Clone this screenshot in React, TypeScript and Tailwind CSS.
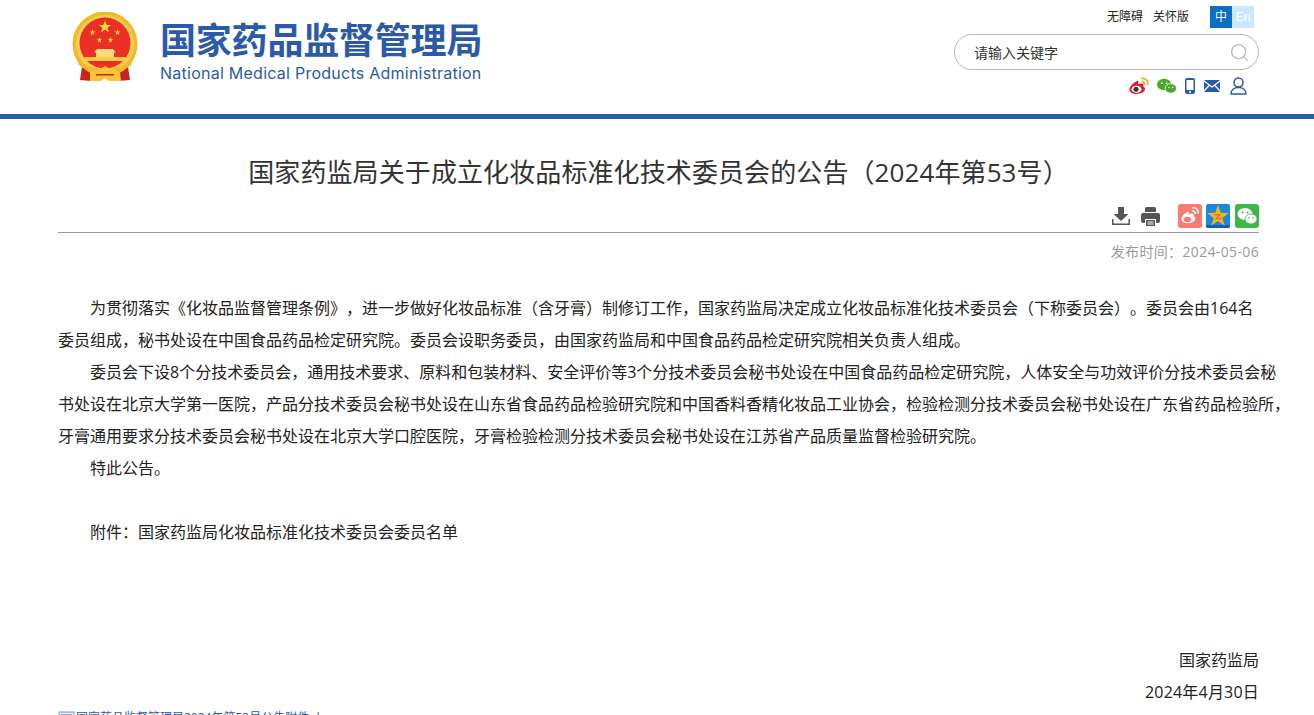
import { Search } from "lucide-react"

const CJK = "font-['Open_Sans','Noto_Sans_CJK_SC',sans-serif] [text-spacing-trim:space-all]"

const BODY_LINES = [
  { text: "为贯彻落实《化妆品监督管理条例》，进一步做好化妆品标准（含牙膏）制修订工作，国家药监局决定成立化妆品标准化技术委员会（下称委员会）。委员会由164名", indent: true },
  { text: "委员组成，秘书处设在中国食品药品检定研究院。委员会设职务委员，由国家药监局和中国食品药品检定研究院相关负责人组成。" },
  { text: "委员会下设8个分技术委员会，通用技术要求、原料和包装材料、安全评价等3个分技术委员会秘书处设在中国食品药品检定研究院，人体安全与功效评价分技术委员会秘", indent: true },
  { text: "书处设在北京大学第一医院，产品分技术委员会秘书处设在山东省食品药品检验研究院和中国香料香精化妆品工业协会，检验检测分技术委员会秘书处设在广东省药品检验所，" },
  { text: "牙膏通用要求分技术委员会秘书处设在北京大学口腔医院，牙膏检验检测分技术委员会秘书处设在江苏省产品质量监督检验研究院。" },
  { text: "特此公告。", indent: true },
  { text: "\u00a0" },
  { text: "附件：国家药监局化妆品标准化技术委员会委员名单", indent: true },
]

// five-pointed star polygon for the emblem
function starPoints(cx: number, cy: number, r: number) {
  const pts: string[] = []
  for (let i = 0; i < 10; i++) {
    const rad = i % 2 === 0 ? r : r * 0.4
    const a = -Math.PI / 2 + (i * Math.PI) / 5
    pts.push(`${(cx + rad * Math.cos(a)).toFixed(2)},${(cy + rad * Math.sin(a)).toFixed(2)}`)
  }
  return pts.join(" ")
}

function Emblem() {
  return (
    <svg width="66" height="70" viewBox="0 0 66 70" className="shrink-0">
      <path d="M11 48 L8 68 L20 69 L33 66 L46 69 L58 68 L55 48 Z" fill="#c9231d" />
      <circle cx="33" cy="32" r="32.500" fill="#f2b92e" />
      <circle cx="33" cy="32" r="29" fill="#f7cf4d" />
      <circle cx="33" cy="31" r="25.500" fill="#ea2f27" />
      <polygon points={starPoints(33, 15, 6.5)} fill="#ffdc3c" />
      <polygon points={starPoints(20.5, 20.5, 3.2)} fill="#ffdc3c" />
      <polygon points={starPoints(45.5, 20.5, 3.2)} fill="#ffdc3c" />
      <polygon points={starPoints(27.5, 28, 3)} fill="#ffdc3c" />
      <polygon points={starPoints(38.5, 28, 3)} fill="#ffdc3c" />
      <path d="M25 37h16l3 3.500h-2V45H24v-4.500h-2z" fill="#f9dc7d" />
      <path d="M13 45h40l2 4H11z" fill="#f7cb45" />
      <path d="M8 49c6 5 14 8 25 8s19-3 25-8l2 3c-6 6-15 9-27 9S12 58 6 52z" fill="#f2b92e" />
      <path d="M18 60c5-1 10-3 15-6 5 3 10 5 15 6l1 9H37l-4-3-4 3H18z" fill="#f6c638" />
      <path d="M24 62h18v1.500H24z" fill="#c9231d" />
    </svg>
  )
}

function Header() {
  return (
    <header className="h-[114px] flex justify-between pl-[72px] pr-[55px]">
      <div className="flex items-start pt-[12px]">
        <Emblem />
        <div className="ml-[22px] pt-[9px] text-[#2b5aa8]">
          <div className={`${CJK} text-[36px] leading-[40px] font-bold whitespace-nowrap tracking-[-0.2px]`}>国家药品监督管理局</div>
          <div className="mt-[1px] font-['Inter',sans-serif] text-[16px] leading-[22px] whitespace-nowrap tracking-[0.25px]">National Medical Products Administration</div>
        </div>
      </div>
      <div className="w-[305px] flex flex-col items-end">
        <div className="h-[26px] mt-[4px] flex items-center pr-[5px]">
          <span className={`${CJK} text-[12px] text-[#222] mr-[10px]`}>无障碍</span>
          <span className={`${CJK} text-[12px] text-[#222] mr-[21px]`}>关怀版</span>
          <span className={`${CJK} w-[22px] h-[22px] bg-[#0b6fc2] text-white text-[12px] flex items-center justify-center`}>中</span>
          <span className="w-[22px] h-[22px] bg-[#cce8ff] text-white text-[12px] font-['Liberation_Sans'] flex items-center justify-center">En</span>
        </div>
        <div className="w-[305px] h-[36px] mt-[4px] border border-[#b5b5b5] rounded-[18px] flex items-center justify-between pl-[19px] pr-[8px]">
          <span className={`${CJK} text-[14px] text-[#333]`}>请输入关键字</span>
          <Search size={21} strokeWidth={1.5} className="text-[#bbb]" />
        </div>
        <div className="mt-[7px] flex items-center pr-[12px] h-[18px]">
          <svg width="20" height="18" viewBox="0 0 20 18">
            <path d="M8 4C3.500 6.500 0 10 .5 13c.7 3.500 6 4.800 10.500 3.500 4-1 6-4 4.500-6-.8-.8-1.500-.7-1.200-2 .4-2-1.500-2.700-5.300-1.300C9.500 4.500 9.500 3.300 8 4z" fill="#e6162d" />
            <ellipse cx="7.500" cy="12.300" rx="5" ry="3.600" fill="#fff" />
            <circle cx="7" cy="12.300" r="2.500" fill="#333" />
            <path d="M12 1.500c4.500-1 7.500 2.500 6.500 6.500M12.500 4.800c2-.5 3.300 1 2.800 3" fill="none" stroke="#f5a623" strokeWidth="1.700" />
          </svg>
          <svg width="20" height="16" viewBox="0 0 21 16" className="ml-[8px]">
            <ellipse cx="7.500" cy="6.500" rx="7.500" ry="6" fill="#4aa82a" />
            <ellipse cx="14.500" cy="10.500" rx="6" ry="5" fill="#4aa82a" stroke="#fff" strokeWidth=".8" />
            <circle cx="5" cy="5" r="1" fill="#fff" />
            <circle cx="10" cy="5" r="1" fill="#fff" />
            <circle cx="12.500" cy="9.500" r=".8" fill="#fff" />
            <circle cx="16.500" cy="9.500" r=".8" fill="#fff" />
          </svg>
          <svg width="10" height="16" viewBox="0 0 10 16" className="ml-[8px]">
            <rect width="10" height="16" rx="2" fill="#2b5aa8" />
            <rect x="1.500" y="2" width="7" height="10" fill="#fff" />
            <circle cx="5" cy="14" r="1" fill="#fff" />
          </svg>
          <svg width="16" height="12" viewBox="0 0 16 12" className="ml-[9px]">
            <rect width="16" height="12" rx="1" fill="#2b5aa8" />
            <path d="M0 1l8 6 8-6M0 11l5.500-6M16 11l-5.500-6" fill="none" stroke="#fff" strokeWidth="1.200" />
          </svg>
          <svg width="17" height="18" viewBox="0 0 17 18" className="ml-[10px]">
            <circle cx="8.500" cy="5.500" r="4.500" fill="none" stroke="#2b5aa8" strokeWidth="1.500" />
            <path d="M1 17c0-4 3-6.500 7.500-6.500S16 13 16 17z" fill="none" stroke="#2b5aa8" strokeWidth="1.500" strokeLinejoin="round" />
          </svg>
        </div>
      </div>
    </header>
  )
}

function ShareBar() {
  return (
    <div className="h-[24px] mt-[11px] flex items-center justify-end border-b border-[#999] pb-[4px] box-content">
      <svg width="18" height="18" viewBox="0 0 18 18">
        <path d="M6 0h6v7h4.500L9 14 1.500 7H6z" fill="#555" />
        <path d="M0 12v6h18v-6h-1.500v4.500h-15V12z" fill="#555" />
      </svg>
      <svg width="19" height="19" viewBox="0 0 19 19" className="ml-[11px]">
        <path d="M4 1.500A1.500 1.500 0 015.500 0h8A1.500 1.500 0 0115 1.500V5H4z" fill="#555" />
        <path d="M2 6h15a2 2 0 012 2v6a2 2 0 01-2 2h-2v-4H4v4H2a2 2 0 01-2-2V8a2 2 0 012-2z" fill="#555" />
        <path d="M5 13h9v6H5z" fill="#555" />
        <path d="M6.500 14.500h6v1h-6zM6.500 16.500h6v1h-6z" fill="#fff" />
      </svg>
      <svg width="24" height="24" viewBox="0 0 24 24" className="ml-[18px]">
        <rect width="24" height="24" rx="3" fill="#f77b6e" />
        <path d="M9.500 8C5.500 10 3 13 3.500 16c.8 3.500 7 4 10.500 2.500 3.500-1.500 4-4.500 2.500-5.500-1-.5-.7-1.500-.8-2.500-.8-1.500-3-1-5 0 .3-2 .3-3.500-1.200-2.500z" fill="#fff" />
        <ellipse cx="9.500" cy="15.500" rx="3.700" ry="2.700" fill="#f77b6e" />
        <path d="M14 4c4-1 7 2 6 6M14 7c2-.5 3.500 1 3 3" fill="none" stroke="#fff" strokeWidth="1.500" />
      </svg>
      <svg width="24" height="24" viewBox="0 0 24 24" className="ml-[4px]">
        <rect width="24" height="24" rx="2" fill="#1b87e0" />
        <path d="M0 21h24v1a2 2 0 01-2 2H2a2 2 0 01-2-2z" fill="#0f5fb8" />
        <polygon points={starPoints(12, 12.5, 11.5)} fill="#f6b21b" />
        <path d="M8.500 10h7l-4 4h4v1.500h-7l4-4h-4z" fill="#e2761a" />
      </svg>
      <svg width="24" height="24" viewBox="0 0 24 24" className="ml-[5px]">
        <rect width="24" height="24" rx="3" fill="#3fb54a" />
        <ellipse cx="10" cy="10" rx="7.500" ry="6" fill="#fff" />
        <ellipse cx="16" cy="15" rx="6" ry="5" fill="#fff" stroke="#3fb54a" strokeWidth=".8" />
        <circle cx="7.500" cy="8.500" r="1" fill="#3fb54a" />
        <circle cx="12.500" cy="8.500" r="1" fill="#3fb54a" />
        <circle cx="14" cy="14" r=".8" fill="#3fb54a" />
        <circle cx="18" cy="14" r=".8" fill="#3fb54a" />
      </svg>
    </div>
  )
}

export default function App() {
  return (
    <div className={`${CJK} h-screen overflow-hidden bg-white`}>
      <Header />
      <div className="h-[5px] bg-[#2b5aac]" />
      <main className="w-[1201px] ml-[58px]">
        <h1 className="mt-[32px] h-[42px] text-center text-[26px] leading-[42px] text-[#333] whitespace-nowrap tracking-[0.1px]">
          国家药监局关于成立化妆品标准化技术委员会的公告（2024年第53号）
        </h1>
        <ShareBar />
        <div className="h-[30px] pt-[7px] text-right text-[14px] leading-[24px] text-[#999] tracking-[0.35px]">发布时间：2024-05-06</div>
        <div className="mt-[29px] text-[16px] leading-[32px] text-[#222]">
          {BODY_LINES.map((line, i) => (
            <div key={i} className={`whitespace-nowrap ${line.indent ? "pl-[32px]" : ""}`}>{line.text}</div>
          ))}
        </div>
        <div className="mt-[96px] text-right text-[16px] leading-[32px] text-[#222]">
          <div>国家药监局</div>
          <div className="tracking-[0.2px]">2024年4月30日</div>
        </div>
        <div className="flex items-center h-[19px] text-[12px] text-[#2b5aac]">
          <svg width="17" height="14" viewBox="0 0 17 14" className="mr-[1px] shrink-0">
            <rect x="1" y="1" width="15" height="12" fill="#dfe8f7" stroke="#7f9bd0" />
            <path d="M3 4h11M3 7h11M3 10h11" stroke="#5f7fbf" />
          </svg>
          国家药品监督管理局2024年第53号公告附件.doc
        </div>
      </main>
    </div>
  )
}
